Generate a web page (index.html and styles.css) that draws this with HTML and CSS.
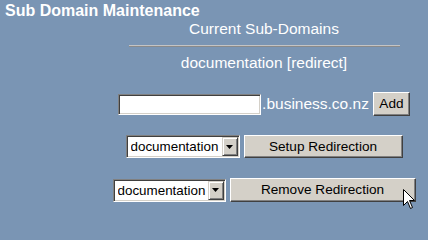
FILE: index.html
```html
<!DOCTYPE html>
<html>
<head>
<meta charset="utf-8">
<title>Sub Domain Maintenance</title>
<link rel="stylesheet" href="styles.css">
</head>
<body>
<div class="title">Sub Domain Maintenance</div>
<div class="panel">
  <div class="heading">Current Sub-Domains</div>
  <div class="rule"></div>
  <div class="entry">documentation [redirect]</div>
  <div class="row row-add">
    <input class="field" type="text" value="">
    <span class="suffix">.business.co.nz</span>
    <button class="btn btn-add">Add</button>
  </div>
  <div class="row row-setup">
    <div class="select-wrap sel-setup">
      <select class="sel"><option>documentation</option></select>
      <span class="arrow"><svg width="7" height="4" viewBox="0 0 7 4"><path d="M0 0H7L3.5 4Z" fill="#000"/></svg></span>
    </div>
    <button class="btn btn-setup">Setup Redirection</button>
  </div>
  <div class="row row-remove">
    <div class="select-wrap sel-remove">
      <select class="sel"><option>documentation</option></select>
      <span class="arrow"><svg width="7" height="4" viewBox="0 0 7 4"><path d="M0 0H7L3.5 4Z" fill="#000"/></svg></span>
    </div>
    <button class="btn btn-remove">Remove Redirection</button>
  </div>
</div>
<svg class="cursor" width="13" height="21" viewBox="0 0 13 21">
  <path d="M0.5 0.5V16.5L4.5 12.5L7.5 19.5L9.5 18.5L6.5 11.5H11.5Z" fill="#fff" stroke="#000" stroke-width="1"/>
</svg>
</body>
</html>
```
FILE: styles.css
```css
html, body {
  margin: 0;
  padding: 0;
}
body {
  background: #7a95b4;
  width: 428px;
  height: 215px;
  overflow: hidden;
  position: relative;
  font-family: "Liberation Sans", Arial, sans-serif;
  color: #fff;
}
.title {
  padding: 2px 0 0 5px;
  font-size: 16px;
  font-weight: bold;
  line-height: 18px;
}
.panel {
  width: 310px;
  margin-left: 109px;
  display: flex;
  flex-direction: column;
  align-items: center;
}
.heading, .entry {
  font-size: 15.5px;
  line-height: 18px;
  white-space: nowrap;
}
.rule {
  width: 271px;
  height: 0;
  border-top: 1px solid #c4c4c4;
  border-bottom: 1px solid #8a8a8a;
  margin: 7px 0 7px 0;
}
.row {
  display: flex;
  align-items: center;
  justify-content: center;
  width: 100%;
}
.row-add {
  margin-top: 20px;
  height: 24px;
}
.row-setup {
  margin-top: 19px;
  height: 23px;
  gap: 4px;
}
.row-remove {
  margin-top: 20px;
  height: 24px;
  gap: 4px;
}
.field {
  box-sizing: border-box;
  width: 143px;
  height: 21px;
  margin: 0;
  padding: 0 3px;
  background: #fff;
  border: 1px solid;
  border-color: #808080 #ffffff #ffffff #808080;
  box-shadow: inset 1px 1px 0 #404040, inset -1px -1px 0 #d4d0c8;
  outline: none;
  font-family: "Liberation Sans", Arial, sans-serif;
  font-size: 13px;
}
.suffix {
  font-size: 15.5px;
  line-height: 18px;
  margin: 0 4px 0 1px;
  white-space: nowrap;
}
.btn {
  box-sizing: border-box;
  margin: 0;
  padding: 0;
  background: #d4d0c8;
  color: #000;
  border: 1px solid;
  border-color: #ffffff #404040 #404040 #ffffff;
  box-shadow: inset -1px -1px 0 #808080;
  font-family: "Liberation Sans", Arial, sans-serif;
  font-size: 13.6px;
  line-height: 16px;
  white-space: nowrap;
}
.btn-add {
  width: 37px;
  height: 24px;
}
.btn-setup {
  width: 159px;
  height: 23px;
}
.btn-remove {
  width: 186px;
  height: 24px;
}
.select-wrap {
  box-sizing: border-box;
  display: flex;
  align-items: stretch;
  height: 23px;
  background: #fff;
  border: 1px solid;
  border-color: #808080 #ffffff #ffffff #808080;
  box-shadow: inset 1px 1px 0 #404040, inset -1px -1px 0 #d4d0c8;
  padding: 1px;
}
.sel-setup {
  width: 114px;
}
.sel-remove {
  width: 113px;
}
.sel {
  -webkit-appearance: none;
  appearance: none;
  flex: 1;
  min-width: 0;
  margin: 0;
  border: 0;
  padding: 0 0 0 3px;
  background: transparent;
  color: #000;
  font-family: "Liberation Sans", Arial, sans-serif;
  font-size: 13.4px;
  outline: none;
}
.arrow {
  box-sizing: border-box;
  width: 16px;
  display: flex;
  align-items: center;
  justify-content: center;
  background: #d4d0c8;
  border: 1px solid;
  border-color: #d4d0c8 #404040 #404040 #d4d0c8;
  box-shadow: inset 1px 1px 0 #ffffff, inset -1px -1px 0 #808080;
}
.cursor {
  position: absolute;
  left: 403px;
  top: 189px;
}
```
